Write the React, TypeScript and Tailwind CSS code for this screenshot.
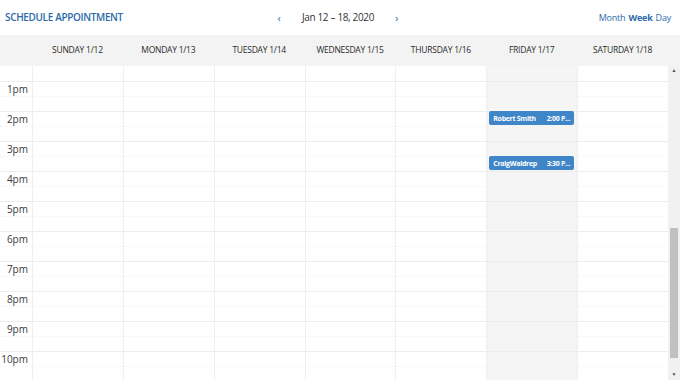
const days = [
  "Sunday 1/12",
  "Monday 1/13",
  "Tuesday 1/14",
  "Wednesday 1/15",
  "Thursday 1/16",
  "Friday 1/17",
  "Saturday 1/18",
];

const hours = ["1pm", "2pm", "3pm", "4pm", "5pm", "6pm", "7pm", "8pm", "9pm", "10pm"];

// slot 0 is the tail of 12pm, then two half-hour slots per hour
const slots = Array.from({ length: 21 }, (_, i) => i);

function Slots() {
  return (
    <>
      {slots.map((i) => (
        <div
          key={i}
          className={
            i === 0
              ? "h-[15px]"
              : i % 2 === 1
              ? "h-[15px] border-t border-[#ececec]"
              : "h-[15px] border-t border-dotted border-[#f3f3f3]"
          }
        />
      ))}
    </>
  );
}

function EventChip({ name, time, top }: { name: string; time: string; top: string }) {
  return (
    <div
      className={`absolute left-[2px] right-[3px] ${top} h-[14px] rounded-[2px] bg-[#3f86c8] text-white text-[7px] font-bold flex items-center justify-between px-[4px] leading-none`}
    >
      <span className="tracking-[-0.3px]">{name}</span>
      <span className="tracking-[-0.3px]">{time}</span>
    </div>
  );
}

export default function App() {
  return (
    <div className="w-[680px] h-[380px] overflow-hidden bg-white font-['Open_Sans',sans-serif] text-[#333]">
      {/* top bar */}
      <div className="h-[35px] flex items-center">
        <div className="flex-1 pl-[5px] text-[10px] font-semibold text-[#2d6aa8] tracking-[-0.35px]">
          SCHEDULE APPOINTMENT
        </div>
        <div className="flex items-center gap-[21px] text-[10px]">
          <span className="text-[#2d6aa8] text-[11px] leading-none">‹</span>
          <span className="tracking-[-0.35px]">Jan 12 – 18, 2020</span>
          <span className="text-[#2d6aa8] text-[11px] leading-none">›</span>
        </div>
        <div className="flex-1 flex justify-end gap-[3px] pr-[9px] text-[9px] text-[#2d6aa8] tracking-[-0.2px]">
          <span>Month</span>
          <span className="font-bold">Week</span>
          <span>Day</span>
        </div>
      </div>

      {/* day header */}
      <div className="h-[31px] bg-[#f3f3f3] flex text-[8.5px] uppercase tracking-[-0.25px] text-[#2b2b2b]">
        <div className="w-[32px]" />
        {days.map((d) => (
          <div key={d} className="flex-1 flex items-center justify-center">
            {d}
          </div>
        ))}
        <div className="w-[12px]" />
      </div>

      {/* body */}
      <div className="flex h-[314px] overflow-hidden">
        <div className="w-[32px] shrink-0">
          <div className="h-[15px]" />
          {hours.map((h) => (
            <div key={h} className="h-[30px] border-t border-[#ececec]">
              <div className="border-b border-dotted border-[#f3f3f3] h-[15px] text-right pr-[4px] text-[10px] leading-[15px] text-[#3a3a3a]">
                {h}
              </div>
            </div>
          ))}
        </div>
        {days.map((d, i) => (
          <div
            key={d}
            className={
              i === 5
                ? "relative flex-1 border-l border-[#efefef] bg-[#f5f5f5]"
                : "relative flex-1 border-l border-[#efefef]"
            }
          >
            <Slots />
            {i === 5 && (
              <>
                <EventChip name="Robert Smith" time="2:00 P..." top="top-[45px]" />
                <EventChip name="CraigWaldrep" time="3:30 P..." top="top-[90px]" />
              </>
            )}
          </div>
        ))}
        {/* scrollbar */}
        <div className="w-[12px] shrink-0 bg-[#f1f1f1] flex flex-col items-center">
          <div className="h-[10px] flex items-center text-[5px] text-[#505050]">▲</div>
          <div className="h-[152px]" />
          <div className="w-[8px] h-[130px] bg-[#c1c1c1]" />
          <div className="flex-1" />
          <div className="h-[10px] flex items-center text-[5px] text-[#505050]">▼</div>
        </div>
      </div>
    </div>
  );
}
